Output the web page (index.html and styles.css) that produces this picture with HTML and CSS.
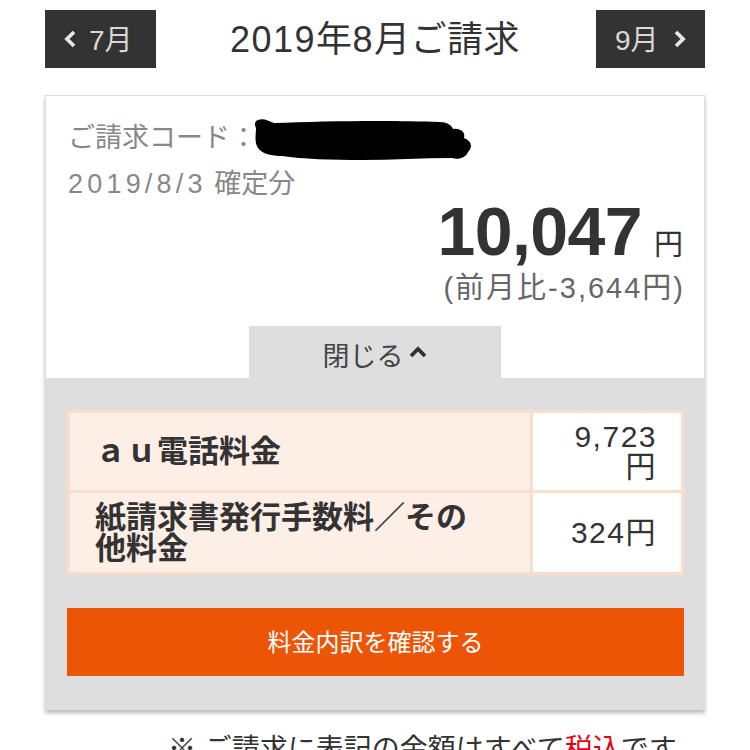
FILE: index.html
```html
<!DOCTYPE html>
<html lang="ja">
<head>
<meta charset="utf-8">
<link rel="stylesheet" href="styles.css">
</head>
<body>
<div class="page">
  <div class="header">
    <div class="navbtn prev">
      <svg class="chev" width="14" height="20" viewBox="0 0 14 20"><path d="M11 3 L4 10 L11 17" fill="none" stroke="#e6e6e6" stroke-width="3.8"/></svg>
      <span>7月</span>
    </div>
    <div class="title"><span class="wd">2019</span>年<span class="wd">8</span>月ご請求</div>
    <div class="navbtn next">
      <span>9月</span>
      <svg class="chev" width="14" height="20" viewBox="0 0 14 20"><path d="M3 3 L10 10 L3 17" fill="none" stroke="#e6e6e6" stroke-width="3.8"/></svg>
    </div>
  </div>

  <div class="card">
    <div class="card-top">
      <div class="code">ご請求コード：<svg class="redact" width="222" height="44" viewBox="0 0 222 44"><path d="M6 2 C12 0 16 3 22 5 C70 3 140 2 188 4 C196 4 200 8 201 11 C208 10 214 14 212 20 C218 22 222 28 216 34 C214 40 206 42 200 40 C170 40 140 42 110 42 C80 42 50 41 30 38 C20 38 10 36 6 30 C2 24 4 16 4 10 C2 6 3 3 6 2 Z" fill="#000"/></svg></div>
      <div class="date"><span class="wd2">2019/8/3</span> 確定分</div>
      <div class="amount"><span class="num">10,047</span><span class="yen">円</span></div>
      <div class="diff">(前月比-3,644円)</div>
      <div class="tabrow"><div class="tab">閉じる<svg class="up" width="20" height="14" viewBox="0 0 20 14"><path d="M3 11 L10 4 L17 11" fill="none" stroke="#333" stroke-width="3.8"/></svg></div></div>
    </div>
    <div class="card-body">
      <div class="table">
        <div class="cell label">ａｕ電話料金</div>
        <div class="cell value">9,723円</div>
        <div class="cell label">紙請求書発行手数料／その他料金</div>
        <div class="cell value">324円</div>
      </div>
      <div class="orange">料金内訳を確認する</div>
    </div>
  </div>

  <div class="note">※ ご請求に表記の金額はすべて<span class="red">税込</span>です</div>
</div>
</body>
</html>
```

FILE: styles.css
```css
html, body {
  margin: 0;
  padding: 0;
  background: #fff;
}
body {
  font-family: "Liberation Sans", "Noto Sans CJK JP", sans-serif;
  color: #333;
  overflow: hidden;
}
.page {
  width: 660px;
  margin: 0 45px;
}
.header {
  display: flex;
  align-items: center;
  justify-content: space-between;
  padding-top: 10px;
}
.navbtn {
  height: 58px;
  background: #333;
  color: #d8d8d8;
  display: flex;
  align-items: center;
  font-size: 28px;
  box-sizing: border-box;
}
.navbtn span {
  margin-top: -3px;
}
.navbtn.prev {
  width: 111px;
  padding-left: 18px;
  gap: 12px;
}
.navbtn.next {
  width: 109px;
  padding-left: 19px;
  gap: 14px;
}
.chev {
  display: block;
}
.title {
  font-size: 36px;
  color: #333;
  letter-spacing: 0.5px;
  padding-right: 2px;
  margin-top: -6px;
}
.title .wd {
  letter-spacing: 1.5px;
}
.card {
  margin-top: 27px;
  border: 1px solid #ddd;
  border-bottom: none;
  box-shadow: 0 3px 4px rgba(0,0,0,0.28);
}
.card-top {
  background: #fff;
  padding: 22px 21px 0 22px;
}
.code, .date {
  font-size: 27px;
  color: #888;
  line-height: 40px;
  height: 40px;
  white-space: nowrap;
}
.wd2 {
  letter-spacing: 4.2px;
}
.redact {
  vertical-align: top;
  margin-left: -5px;
}
.date {
  margin-top: 6px;
}
.amount {
  display: flex;
  justify-content: flex-end;
  align-items: baseline;
  margin-top: -8px;
  line-height: 70px;
  height: 70px;
}
.num {
  font-size: 68px;
  font-weight: bold;
  color: #333;
  letter-spacing: -0.6px;
}
.yen {
  font-size: 29px;
  color: #333;
  margin-left: 12px;
}
.diff {
  text-align: right;
  font-size: 29px;
  color: #666;
  line-height: 36px;
  margin-top: 4px;
  letter-spacing: 2px;
  margin-right: -2px;
}
.tabrow {
  display: flex;
  justify-content: center;
  margin-top: 20px;
  margin-left: -22px;
  margin-right: -21px;
}
.tab {
  width: 252px;
  height: 52px;
  background: #dedede;
  display: flex;
  align-items: center;
  justify-content: center;
  font-size: 27px;
  color: #444;
  padding-top: 4px;
  box-sizing: border-box;
  gap: 4px;
}
.up {
  display: block;
  margin-top: -4px;
}
.card-body {
  background: #dedede;
  padding: 32px 20px 34px 21px;
}
.table {
  display: grid;
  grid-template-columns: 460px 148px;
  grid-template-rows: 77px 79px;
  gap: 3px;
  padding: 3px;
  background: #fcdccb;
}
.cell {
  display: flex;
  align-items: center;
}
.label {
  background: #fdeee6;
  font-weight: bold;
  color: #333;
  font-size: 31px;
  line-height: 31px;
  padding-left: 25px;
  padding-right: 60px;
}
.value {
  background: #fff;
  justify-content: flex-end;
  text-align: right;
  font-size: 30px;
  line-height: 30px;
  letter-spacing: 1.5px;
  padding: 0 24px 0 28px;
  color: #333;
}
.orange {
  margin-top: 33px;
  height: 68px;
  background: #eb5505;
  color: #fff;
  font-size: 24px;
  display: flex;
  align-items: center;
  justify-content: center;
  padding-bottom: 3px;
  box-sizing: border-box;
}
.note {
  margin-top: 20px;
  padding-left: 123px;
  font-size: 28px;
  line-height: 40px;
  color: #333;
  white-space: nowrap;
}
.red {
  color: #e60012;
}
```
